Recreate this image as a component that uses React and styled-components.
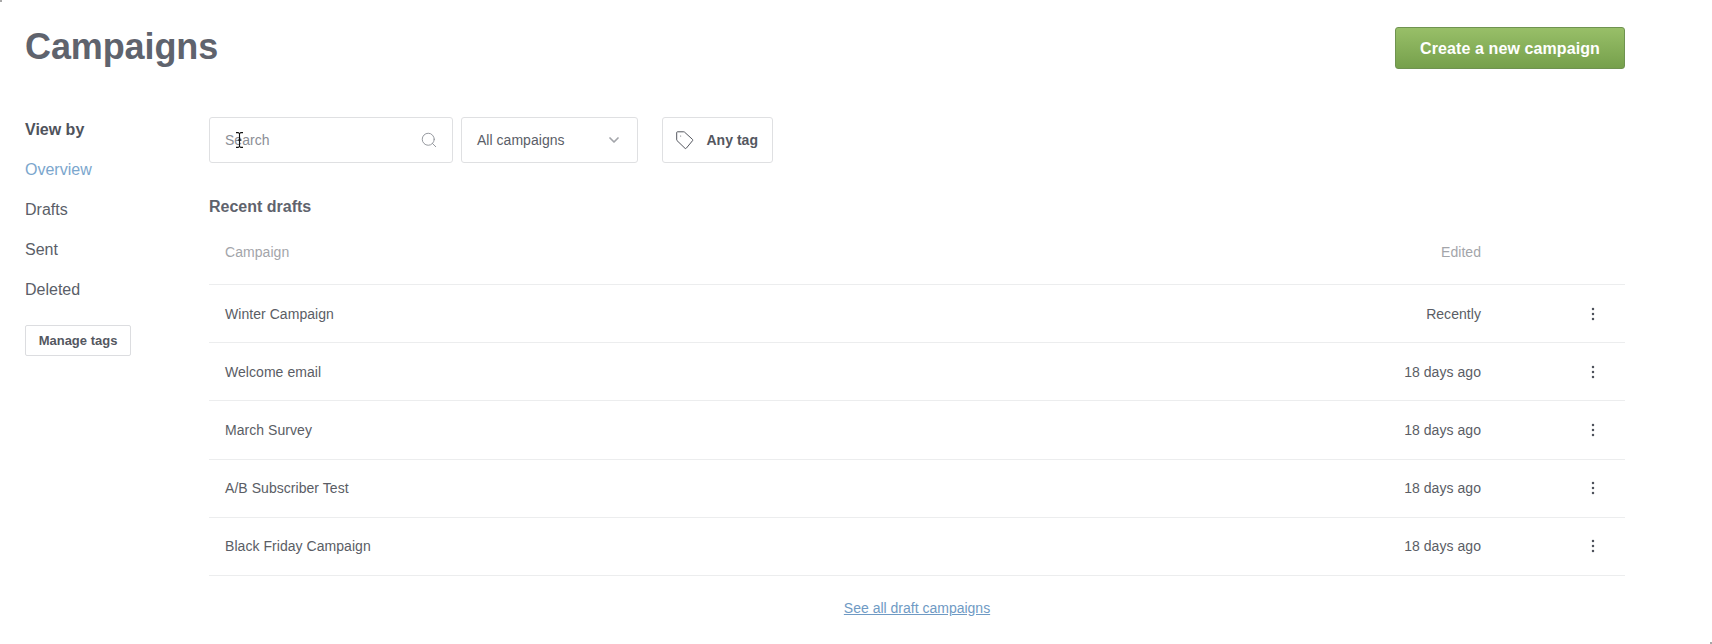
import React from 'react';
import styled, {createGlobalStyle} from 'styled-components';
import {ChevronDown, Search} from 'lucide-react';

const GlobalStyle = createGlobalStyle`
  html, body {
    margin: 0;
    padding: 0;
    background: #fff;
  }
  body {
    font-family: "Liberation Sans", Arial, sans-serif;
    color: #4f535c;
    -webkit-font-smoothing: antialiased;
  }
`

const Page = styled.div`
  position: relative;
  box-sizing: border-box;
  width: 1712px;
  height: 644px;
  padding: 27px 87px 0 25px;
  overflow: hidden;

  &::before, &::after {
    content: '';
    position: absolute;
    width: 2px;
    height: 2px;
    background: #a8a8a8;
  }
  &::before {
    top: 0;
    left: 0;
  }
  &::after {
    right: 0;
    bottom: 0;
  }
`

const Header = styled.header`
  display: flex;
  align-items: flex-start;
  justify-content: space-between;
  height: 90px;
`

const Title = styled.h1`
  margin: 1px 0 0;
  font-size: 36px;
  line-height: 38px;
  font-weight: 700;
  letter-spacing: -0.1px;
  color: #5f636d;
`

const CreateButton = styled.button`
  box-sizing: border-box;
  width: 230px;
  height: 42px;
  padding: 1px 0 0;
  border: 1px solid #6f9350;
  border-radius: 3px;
  background: linear-gradient(#98bf68, #76a04c);
  color: #fff;
  font: 700 16px "Liberation Sans", Arial, sans-serif;
  letter-spacing: 0.1px;
`

const Body = styled.div`
  display: flex;
`

const Sidebar = styled.nav`
  flex: 0 0 184px;
  display: flex;
  flex-direction: column;
  align-items: flex-start;
  padding-top: 1px;
`

const SideItem = styled.a`
  height: 40px;
  line-height: 24px;
  font-size: 16px;
  font-weight: ${props => props.$heading ? 700 : 400};
  color: ${props => props.$active ? '#7ba6cd' : props.$heading ? '#4f535c' : '#5a5e68'};
`

const ManageTags = styled.button`
  box-sizing: border-box;
  width: 106px;
  height: 31px;
  margin-top: 7px;
  padding: 0;
  border: 1px solid #dcdde0;
  border-radius: 2px;
  background: #fff;
  color: #54575f;
  font: 700 13px "Liberation Sans", Arial, sans-serif;
`

const Main = styled.main`
  flex: 1;
  min-width: 0;
`

const Toolbar = styled.div`
  display: flex;
  height: 46px;
`

const FilterBox = styled.div`
  position: relative;
  box-sizing: border-box;
  width: ${props => props.$width}px;
  height: 46px;
  margin-right: ${props => props.$gap}px;
  padding: ${props => props.$padding || '0 15px'};
  display: flex;
  align-items: center;
  justify-content: space-between;
  border: 1px solid #dfe0e2;
  border-radius: 3px;
  font-size: 14px;
  letter-spacing: 0.03px;
  color: ${props => props.$muted ? '#8b8e95' : '#5a5e68'};
`

const TagLabel = styled.span`
  font-weight: 700;
  color: #54575f;
`

const TextCursor = styled.svg`
  position: absolute;
  left: 25px;
  top: 14px;
`

const SectionTitle = styled.h2`
  margin: 33px 0 0;
  font-size: 16px;
  line-height: 22px;
  font-weight: 700;
  color: #5f636d;
`

const Table = styled.div`
  display: flex;
  flex-direction: column;
`

const Row = styled.div`
  box-sizing: border-box;
  height: ${props => props.$head ? 67 : 58.2}px;
  padding: ${props => props.$head ? '2px 0 0 16px' : '0 0 0 16px'};
  display: flex;
  align-items: center;
  border-bottom: 1px solid #ecedee;
  font-size: 14px;
  letter-spacing: 0.05px;
  color: ${props => props.$head ? '#a3a5aa' : '#5a5d65'};
`

const Name = styled.span`
  flex: 1;
`

const Edited = styled.span`
  width: 200px;
  text-align: right;
`

const Actions = styled.span`
  width: 144px;
  padding-right: 30px;
  box-sizing: border-box;
  display: flex;
  justify-content: flex-end;
`

const SeeAll = styled.a`
  display: block;
  margin-top: 22px;
  font-size: 14px;
  line-height: 20px;
  text-align: center;
  color: #6f9ac4;
  text-decoration: underline;
`

const SearchIcon = styled(Search)`
  margin-right: -1px;
`

const Dots = () => (
  <svg width="4" height="14" viewBox="0 0 4 14" fill="#4f535c">
    <circle cx="2" cy="2" r="1.25" />
    <circle cx="2" cy="7" r="1.25" />
    <circle cx="2" cy="12" r="1.25" />
  </svg>
);

const TagIcon = () => (
  <svg width="18" height="19" viewBox="0 0 18 19" fill="none" stroke="#54575f" strokeWidth="1" strokeLinejoin="round">
    <path d="M1.4.8h6.4a1 1 0 0 1 .7.3l8 7.3a.9.9 0 0 1 .1 1.2l-6.3 7.6a.9.9 0 0 1-1.3.1L1 9.6a1 1 0 0 1-.3-.7V1.5a.7.7 0 0 1 .7-.7z" />
    <circle cx="4.7" cy="5" r=".5" fill="#54575f" stroke="none" />
  </svg>
);

const drafts = [
  {name: 'Winter Campaign', edited: 'Recently'},
  {name: 'Welcome email', edited: '18 days ago'},
  {name: 'March Survey', edited: '18 days ago'},
  {name: 'A/B Subscriber Test', edited: '18 days ago'},
  {name: 'Black Friday Campaign', edited: '18 days ago'}
];

export default function App () {
  return (
    <Page>
      <GlobalStyle />
      <Header>
        <Title>Campaigns</Title>
        <CreateButton>Create a new campaign</CreateButton>
      </Header>
      <Body>
        <Sidebar>
          <SideItem $heading>View by</SideItem>
          <SideItem $active>Overview</SideItem>
          <SideItem>Drafts</SideItem>
          <SideItem>Sent</SideItem>
          <SideItem>Deleted</SideItem>
          <ManageTags>Manage tags</ManageTags>
        </Sidebar>
        <Main>
          <Toolbar>
            <FilterBox $width={244} $gap={8} $muted>
              Search
              <SearchIcon size={18} strokeWidth={1.2} color="#8b8e95" />
              <TextCursor width="9" height="16" viewBox="0 0 9 16" fill="none" stroke="#111" strokeWidth="1.1">
                <path d="M1 .6h2.2l1.3 1 1.3-1H8M4.5 1.6v12.8M1 15.4h2.2l1.3-1 1.3 1H8M2.8 8h3.4" />
              </TextCursor>
            </FilterBox>
            <FilterBox $width={177} $gap={24}>
              All campaigns
              <ChevronDown size={16} strokeWidth={2.6} color="#a3a5aa" />
            </FilterBox>
            <FilterBox $width={111} $padding="0 14px 0 13px">
              <TagIcon />
              <TagLabel>Any tag</TagLabel>
            </FilterBox>
          </Toolbar>
          <SectionTitle>Recent drafts</SectionTitle>
          <Table>
            <Row $head>
              <Name>Campaign</Name>
              <Edited>Edited</Edited>
              <Actions />
            </Row>
            {drafts.map(draft => (
              <Row key={draft.name}>
                <Name>{draft.name}</Name>
                <Edited>{draft.edited}</Edited>
                <Actions><Dots /></Actions>
              </Row>
            ))}
          </Table>
          <SeeAll>See all draft campaigns</SeeAll>
        </Main>
      </Body>
    </Page>
  );
}
